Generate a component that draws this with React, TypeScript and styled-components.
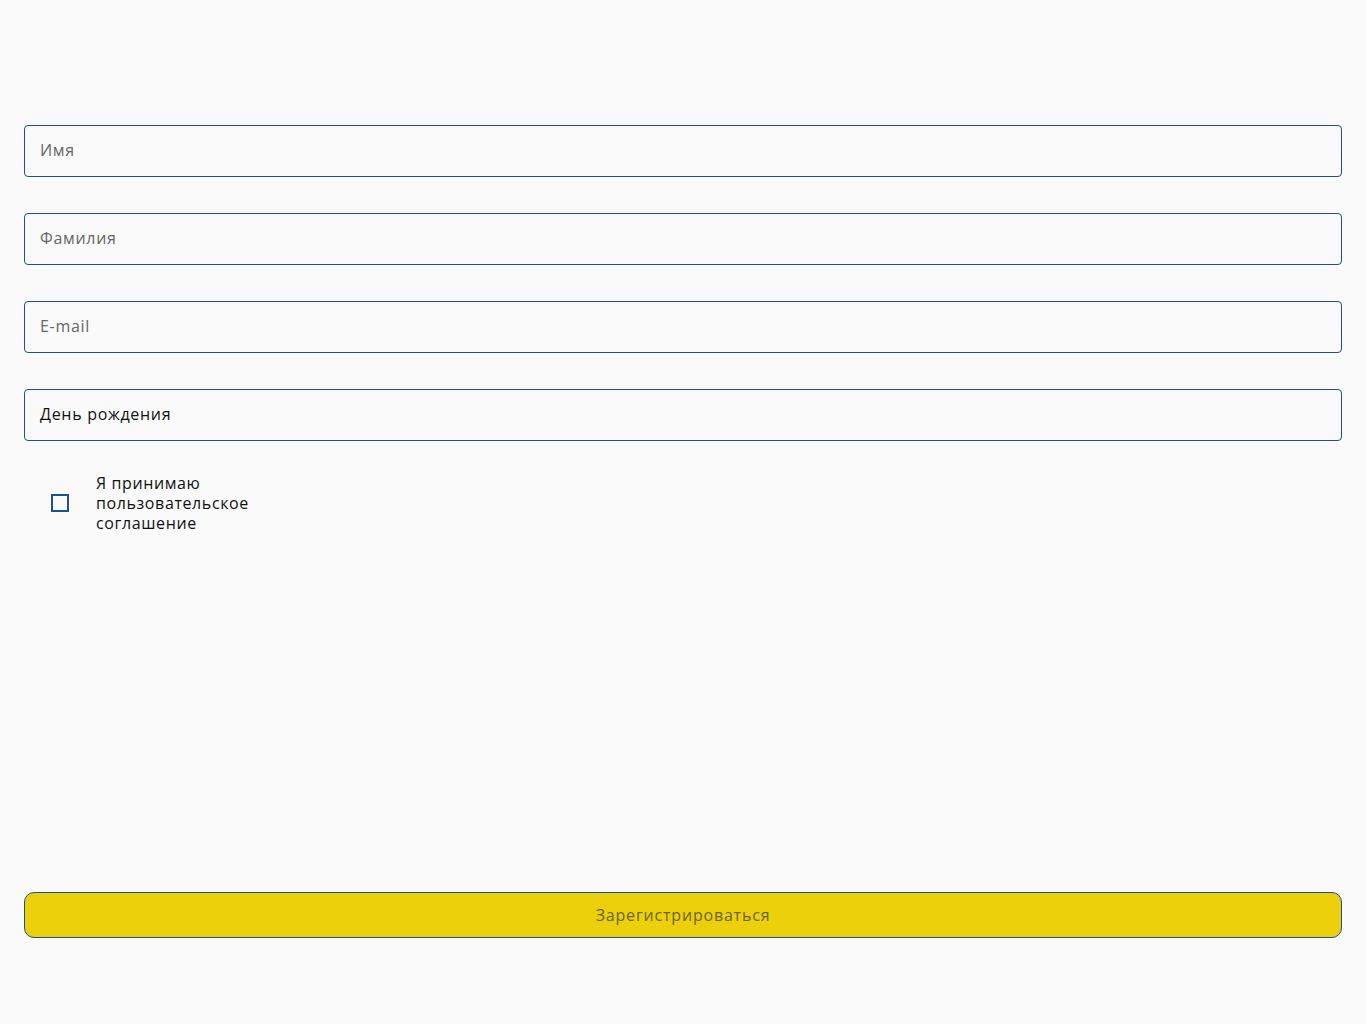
import React from 'react';
import styled, {createGlobalStyle} from 'styled-components';

const GlobalStyle = createGlobalStyle`
    html, body {
        margin: 0;
        padding: 0;
        background: #fafafa;
    }
    * {
        box-sizing: border-box;
    }
`;

const Page = styled.div`
    display: flex;
    flex-direction: column;
    min-height: 100vh;
    padding: 125px 24px 86px 24px;
    background: #fafafa;
    font-family: "Open Sans", "Noto Sans", sans-serif;
`;

const Form = styled.form`
    display: flex;
    flex-direction: column;
    flex: 1;
`;

const Fields = styled.div`
    display: flex;
    flex-direction: column;
    gap: 36px;
`;

interface FieldProps {
    filled?: boolean;
}

const Field = styled.div<FieldProps>`
    display: flex;
    align-items: center;
    height: 52px;
    padding: 0 15px 2px 15px;
    border: 1px solid #1c4fa1;
    border-radius: 4px;
    font-size: 16px;
    letter-spacing: 0.7px;
    color: ${props => props.filled ? '#111111' : '#666666'};
`;

const AgreeRow = styled.label`
    display: flex;
    align-items: center;
    margin-top: 32px;
    padding-left: 27px;
`;

const Box = styled.span`
    width: 18px;
    height: 18px;
    border: 2px solid #1c4fa1;
    flex-shrink: 0;
`;

const AgreeText = styled.span`
    margin-left: 27px;
    width: 175px;
    font-size: 16px;
    line-height: 20px;
    font-weight: 500;
    color: #111111;
    letter-spacing: 0.6px;
`;

const Submit = styled.button`
    margin-top: auto;
    height: 46px;
    width: 100%;
    border: 1px solid #1c4fa1;
    border-radius: 10px;
    background: #ebd00b;
    color: #6e6407;
    font-family: "Open Sans", "Noto Sans", sans-serif;
    font-size: 16px;
    letter-spacing: 0.8px;
    cursor: pointer;
`;

const fields = [
    {label: 'Имя'},
    {label: 'Фамилия'},
    {label: 'E-mail'},
    {label: 'День рождения', filled: true},
];

export default function App() {
    return (
        <>
            <GlobalStyle/>
            <Page>
                <Form onSubmit={e => e.preventDefault()}>
                    <Fields>
                        {fields.map(f => (
                            <Field key={f.label} filled={f.filled}>{f.label}</Field>
                        ))}
                    </Fields>
                    <AgreeRow>
                        <Box/>
                        <AgreeText>Я принимаю пользовательское соглашение</AgreeText>
                    </AgreeRow>
                    <Submit type="submit">Зарегистрироваться</Submit>
                </Form>
            </Page>
        </>
    );
}
